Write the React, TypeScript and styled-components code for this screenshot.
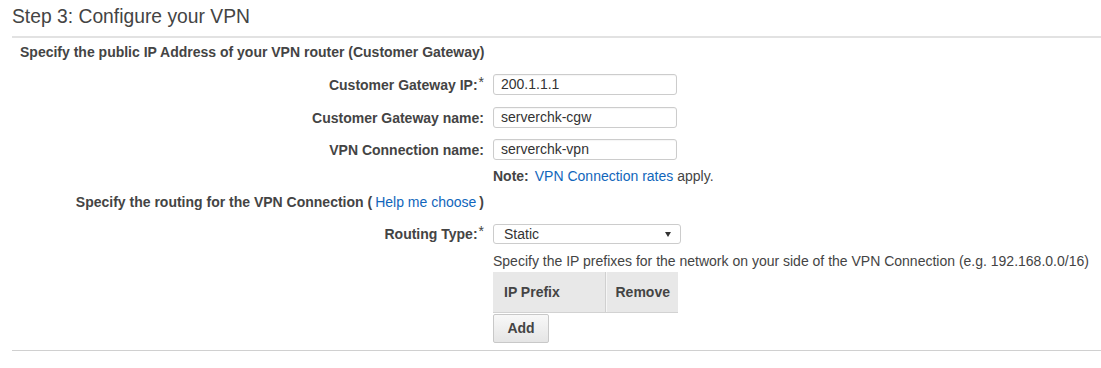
import React from "react";
import styled, { createGlobalStyle } from "styled-components";

const GlobalStyle = createGlobalStyle`
  html, body {
    margin: 0;
    padding: 0;
    background: #fff;
  }
  body {
    font-family: "Liberation Sans", Arial, sans-serif;
    font-size: 14px;
    color: #444;
  }
`;

const Page = styled.div`
  width: 1101px;
  height: 368px;
  padding-left: 12px;
  box-sizing: border-box;
  overflow: hidden;
`;

const Title = styled.h2`
  margin: 0;
  height: 36px;
  line-height: 33px;
  font-size: 19.3px;
  font-weight: normal;
  color: #444;
  border-bottom: 2px solid #e2e2e2;
`;

const SectionHeader = styled.div`
  padding: 6px 0 0 8px;
  line-height: 16px;
  font-weight: bold;
`;

const Row = styled.div<{ $mt: number; $h?: number }>`
  display: flex;
  align-items: center;
  gap: 9px;
  margin-top: ${(p) => p.$mt}px;
  min-height: ${(p) => p.$h ?? 16}px;
`;

const Label = styled.label`
  width: 472px;
  flex: none;
  text-align: right;
  font-weight: bold;
  line-height: 16px;
  white-space: nowrap;
`;

const Req = styled.span`
  font-weight: normal;
  position: relative;
  top: -3px;
  margin-left: 1px;
`;

const Field = styled.div`
  display: flex;
  flex-direction: column;
  align-items: flex-start;
`;

const TextInput = styled.div`
  width: 184px;
  height: 21px;
  box-sizing: border-box;
  border: 1px solid #ccc;
  border-radius: 3px;
  box-shadow: inset 0 1px 1px rgba(0, 0, 0, 0.04);
  padding: 0 7px;
  line-height: 19px;
  color: #333;
`;

const Link = styled.a`
  color: #1166bb;
  text-decoration: none;
  cursor: pointer;
`;

const Note = styled.div`
  line-height: 16px;
  b {
    margin-right: 6px;
  }
`;

const Paren = styled.span<{ $side: "l" | "r" }>`
  margin-${(p) => (p.$side === "l" ? "right" : "left")}: 3px;
`;

const Select = styled.div`
  width: 188px;
  height: 20px;
  box-sizing: border-box;
  border: 1px solid #ccc;
  border-radius: 3px;
  background: #fff;
  display: flex;
  align-items: center;
  justify-content: space-between;
  padding: 0 9px 0 10px;
  color: #333;
`;

const Help = styled.div`
  line-height: 16px;
  margin-top: 9px;
  white-space: nowrap;
`;

const Table = styled.table`
  margin-top: 3px;
  border-collapse: collapse;
`;

const Th = styled.th<{ $w: number }>`
  height: 40px;
  box-sizing: border-box;
  padding: 0 0 0 11px;
  width: ${(p) => p.$w}px;
  text-align: left;
  font-weight: bold;
  color: #444;
  background: #e8e8e8;
  border-bottom: 1px solid #d2d2d2;
  & + & {
    padding-left: 10px;
    border-left: 1px solid #d0d0d0;
    box-shadow: inset 1px 0 0 #f6f6f6;
  }
`;

const Button = styled.button`
  margin-top: 1px;
  width: 56px;
  height: 29px;
  font-family: inherit;
  font-size: 14px;
  font-weight: bold;
  color: #444;
  border: 1px solid #c8c8c8;
  border-radius: 2px;
  background: linear-gradient(#f8f8f8, #e5e5e5);
  padding: 0;
`;

const Divider = styled.hr`
  margin: 7px 0 0;
  border: none;
  border-top: 1px solid #d0d0d0;
`;

const Caret = () => (
  <svg width="6" height="5" viewBox="0 0 6 5">
    <path d="M0 0h6L3 5z" fill="#333" />
  </svg>
);

export default function App() {
  return (
    <>
      <GlobalStyle />
      <Page>
        <Title>Step 3: Configure your VPN</Title>
        <SectionHeader>
          Specify the public IP Address of your VPN router (Customer Gateway)
        </SectionHeader>

        <Row $mt={14} $h={21}>
          <Label>
            Customer Gateway IP:<Req>*</Req>
          </Label>
          <TextInput>200.1.1.1</TextInput>
        </Row>
        <Row $mt={12} $h={21}>
          <Label>Customer Gateway name:</Label>
          <TextInput>serverchk-cgw</TextInput>
        </Row>
        <Row $mt={11} $h={21}>
          <Label>VPN Connection name:</Label>
          <TextInput>serverchk-vpn</TextInput>
        </Row>
        <Row $mt={8}>
          <Label />
          <Note>
            <b>Note:</b>
            <Link>VPN Connection rates</Link> apply.
          </Note>
        </Row>

        <Row $mt={10}>
          <Label>
            Specify the routing for the VPN Connection <Paren $side="l">(</Paren>
            <Link style={{ fontWeight: "normal" }}>Help me choose</Link>
            <Paren $side="r">)</Paren>
          </Label>
        </Row>

        <Row $mt={14} $h={20}>
          <Label>
            Routing Type:<Req>*</Req>
          </Label>
          <Select>
            <span>Static</span>
            <Caret />
          </Select>
        </Row>

        <Row $mt={0}>
          <Label />
          <Field>
            <Help>
              Specify the IP prefixes for the network on your side of the VPN
              Connection (e.g. 192.168.0.0/16)
            </Help>
            <Table>
              <thead>
                <tr>
                  <Th $w={112}>IP Prefix</Th>
                  <Th $w={73}>Remove</Th>
                </tr>
              </thead>
            </Table>
            <Button>Add</Button>
          </Field>
        </Row>
        <Divider />
      </Page>
    </>
  );
}
